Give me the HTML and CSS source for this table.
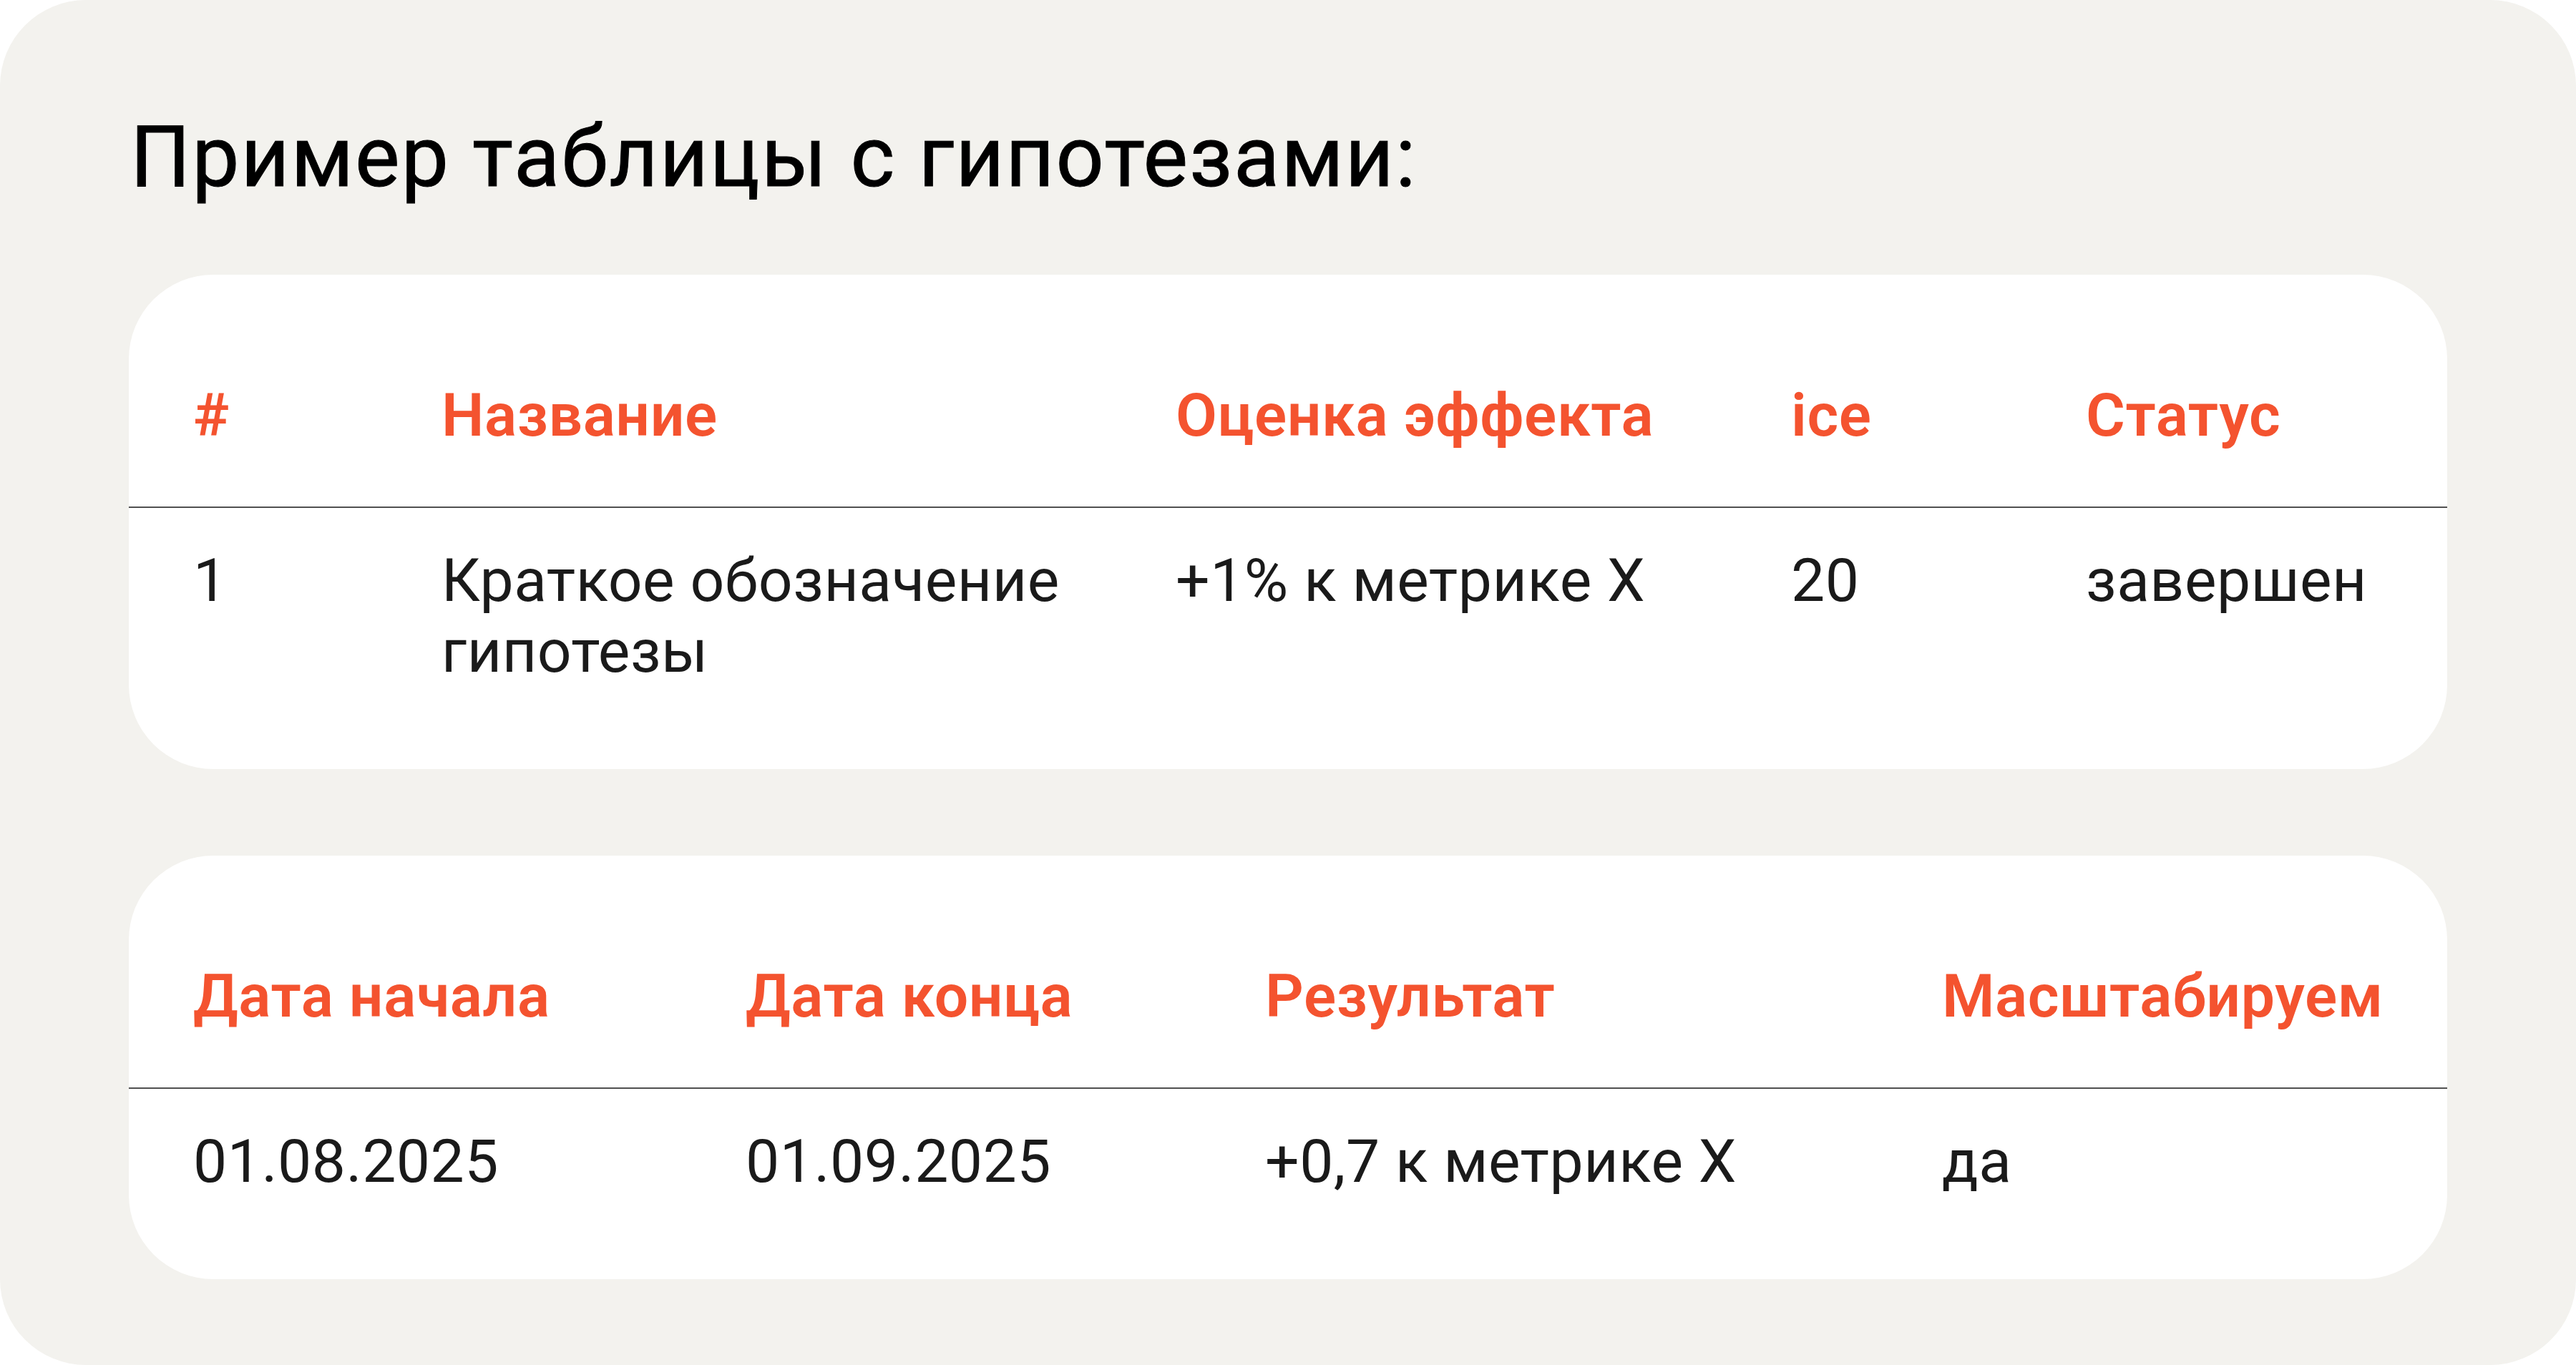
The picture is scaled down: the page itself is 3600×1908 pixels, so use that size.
FILE: index.html
```html
<!DOCTYPE html>
<html lang="ru">
<head>
<meta charset="utf-8">
<title>Пример таблицы с гипотезами</title>
<link rel="stylesheet" href="styles.css">
</head>
<body>
<div class="frame">
  <h1 class="title">Пример таблицы с гипотезами:</h1>
  <section class="card">
    <div class="row head cols-a">
      <div>#</div>
      <div>Название</div>
      <div>Оценка эффекта</div>
      <div>ice</div>
      <div>Статус</div>
    </div>
    <div class="row body cols-a">
      <div>1</div>
      <div>Краткое обозначение гипотезы</div>
      <div>+1% к метрике X</div>
      <div>20</div>
      <div>завершен</div>
    </div>
  </section>
  <section class="card">
    <div class="row head cols-b">
      <div>Дата начала</div>
      <div>Дата конца</div>
      <div>Результат</div>
      <div>Масштабируем</div>
    </div>
    <div class="row body cols-b">
      <div>01.08.2025</div>
      <div>01.09.2025</div>
      <div>+0,7 к метрике X</div>
      <div>да</div>
    </div>
  </section>
</div>
</body>
</html>
```
FILE: styles.css
```css
html, body {
  margin: 0;
  padding: 0;
  background: #ffffff;
}
body {
  font-family: Roboto, "Noto Sans", sans-serif;
  color: #1a1a1a;
}
.frame {
  width: 3600px;
  height: 1908px;
  box-sizing: border-box;
  background: #f3f2ee;
  border-radius: 120px;
  padding: 150px 180px 0 180px;
  display: flex;
  flex-direction: column;
}
.title {
  margin: 0 0 0 2px;
  font-weight: 400;
  font-size: 118px;
  line-height: 140px;
  color: #000;
  letter-spacing: 2px;
  -webkit-text-stroke: 1px #000;
}
.card {
  background: #fff;
  border-radius: 118px;
  margin-top: 94px;
}
.card + .card {
  margin-top: 121px;
}
.row {
  display: grid;
  padding: 0 90px;
  font-size: 84px;
  line-height: 99px;
}
.cols-a {
  grid-template-columns: 347px 1026px 860px 412px 1fr;
}
.cols-b {
  grid-template-columns: 772px 726px 946px 1fr;
}
.head {
  color: #f4532f;
  font-weight: 600;
  letter-spacing: 0.6px;
  padding-top: 147px;
  padding-bottom: 78px;
  border-bottom: 2px solid #505050;
}
.body {
  letter-spacing: 0.5px;
  padding-top: 52px;
  padding-bottom: 115px;
}
```
